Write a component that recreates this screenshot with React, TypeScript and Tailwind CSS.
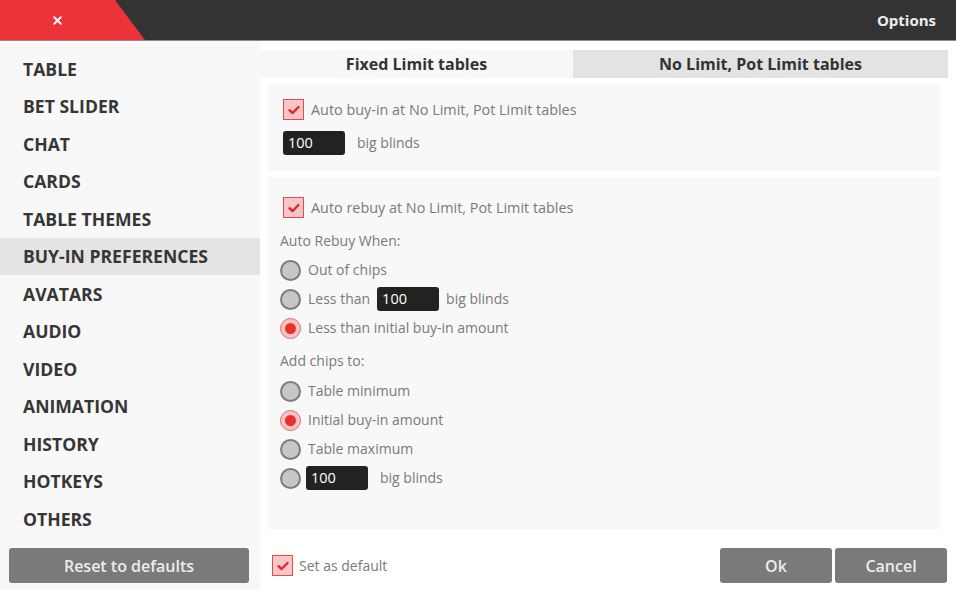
import { X } from 'lucide-react';

const menu = [
  'TABLE',
  'BET SLIDER',
  'CHAT',
  'CARDS',
  'TABLE THEMES',
  'BUY-IN PREFERENCES',
  'AVATARS',
  'AUDIO',
  'VIDEO',
  'ANIMATION',
  'HISTORY',
  'HOTKEYS',
  'OTHERS',
];

function Check() {
  return (
    <span className="flex size-[21px] shrink-0 items-center justify-center border-[1.5px] border-[#e84a4a] bg-[#f8c6c6]">
      <svg width="12" height="10" viewBox="0 0 12 10">
        <path d="M1.5 5.2 L4.6 8 L10.5 2" fill="none" stroke="#e3262b" strokeWidth="2.4" strokeLinecap="round" strokeLinejoin="round" />
      </svg>
    </span>
  );
}

function Radio({ on = false }: { on?: boolean }) {
  if (on) {
    return (
      <span className="flex size-[21px] shrink-0 items-center justify-center rounded-full border-[1.5px] border-[#e56a6a] bg-[#f7c3c3]">
        <span className="size-[11px] rounded-full bg-[#e8302f]" />
      </span>
    );
  }
  return <span className="size-[21px] shrink-0 rounded-full border-2 border-[#7c7c7c] bg-[#c6c6c6]" />;
}

function Num() {
  return (
    <span className="flex h-[24px] w-[62px] shrink-0 items-center rounded-[3px] bg-[#222222] pl-[5px] text-[14.5px] leading-[20px] text-white">
      100
    </span>
  );
}

function Opt({ on, children }: { on?: boolean; children: React.ReactNode }) {
  return (
    <div className="flex h-[28px] items-center gap-[7px]">
      <Radio on={on} />
      {children}
    </div>
  );
}

export default function App() {
  return (
    <div className="flex h-[590px] w-[956px] flex-col overflow-hidden bg-white font-['Open_Sans',sans-serif] text-[14px] leading-[20px] text-[#7a7a7a]">
      <div className="flex h-[41px] shrink-0 items-center border-b border-[#8c8c8c] bg-[#333333]">
        <div className="flex h-full w-[145px] items-center bg-[#ee3338] pl-[51px] [clip-path:polygon(0_0,115px_0,145px_100%,0_100%)]">
          <X size={13} strokeWidth={3.5} color="white" />
        </div>
        <div className="ml-auto pr-[20px] text-[15px] font-bold text-[#eeeeee]">Options</div>
      </div>

      <div className="flex min-h-0 flex-1">
        <aside className="flex w-[260px] shrink-0 flex-col bg-[#f8f8f8] pt-[9px] pb-[7px]">
          {menu.map((m) => (
            <div
              key={m}
              className={`flex h-[37.5px] items-center pl-[23px] text-[17.6px] font-bold text-[#363636] ${
                m === 'BUY-IN PREFERENCES' ? 'bg-[#e4e4e4]' : ''
              }`}
            >
              {m}
            </div>
          ))}
          <button className="mx-[9px] mt-auto h-[35px] w-[240px] rounded-[3px] bg-[#7a7a7a] text-[16px] font-semibold text-[#ececec]">
            Reset to defaults
          </button>
        </aside>

        <main className="flex flex-1 flex-col pt-[9px] pr-[8px] pb-[7px]">
          <div className="flex h-[28px] text-[16px] font-bold text-[#333333]">
            <div className="flex w-[313px] items-center justify-center bg-[#f8f8f8]">Fixed Limit tables</div>
            <div className="flex flex-1 items-center justify-center bg-[#e3e3e3]">No Limit, Pot Limit tables</div>
          </div>

          <section className="mx-[8px] mt-[6px] flex flex-col gap-[11px] bg-[#f8f8f8] pt-[15px] pb-[16px] pl-[15px]">
            <label className="flex items-center gap-[7px] text-[14.4px]">
              <Check />
              Auto buy-in at No Limit, Pot Limit tables
            </label>
            <div className="flex items-center gap-[12px]">
              <Num />
              big blinds
            </div>
          </section>

          <section className="mx-[8px] mt-[6px] flex h-[352px] flex-col bg-[#f8f8f8] pt-[20px] pl-[12px]">
            <label className="ml-[3px] flex items-center gap-[7px] text-[14.4px]">
              <Check />
              Auto rebuy at No Limit, Pot Limit tables
            </label>
            <div className="mt-[13px]">Auto Rebuy When:</div>
            <div className="mt-[5px] flex flex-col gap-[1px]">
              <Opt>Out of chips</Opt>
              <Opt>
                Less than
                <Num />
                big blinds
              </Opt>
              <Opt on>Less than initial buy-in amount</Opt>
            </div>
            <div className="mt-[9px]">Add chips to:</div>
            <div className="mt-[6px] flex flex-col gap-[1px]">
              <Opt>Table minimum</Opt>
              <Opt on>Initial buy-in amount</Opt>
              <Opt>Table maximum</Opt>
              <div className="flex h-[28px] items-center gap-[5px]">
                <Radio />
                <Num />
                <span className="ml-[7px]">big blinds</span>
              </div>
            </div>
          </section>

          <div className="mt-auto flex h-[35px] items-center pl-[12px]">
            <label className="flex items-center gap-[6px]">
              <Check />
              Set as default
            </label>
            <div className="ml-auto flex gap-[3px] pr-[1px]">
              <button className="h-[35px] w-[112px] rounded-[3px] bg-[#7a7a7a] text-[16px] font-semibold text-[#ececec]">Ok</button>
              <button className="h-[35px] w-[112px] rounded-[3px] bg-[#7a7a7a] text-[16px] font-semibold text-[#ececec]">Cancel</button>
            </div>
          </div>
        </main>
      </div>
    </div>
  );
}
